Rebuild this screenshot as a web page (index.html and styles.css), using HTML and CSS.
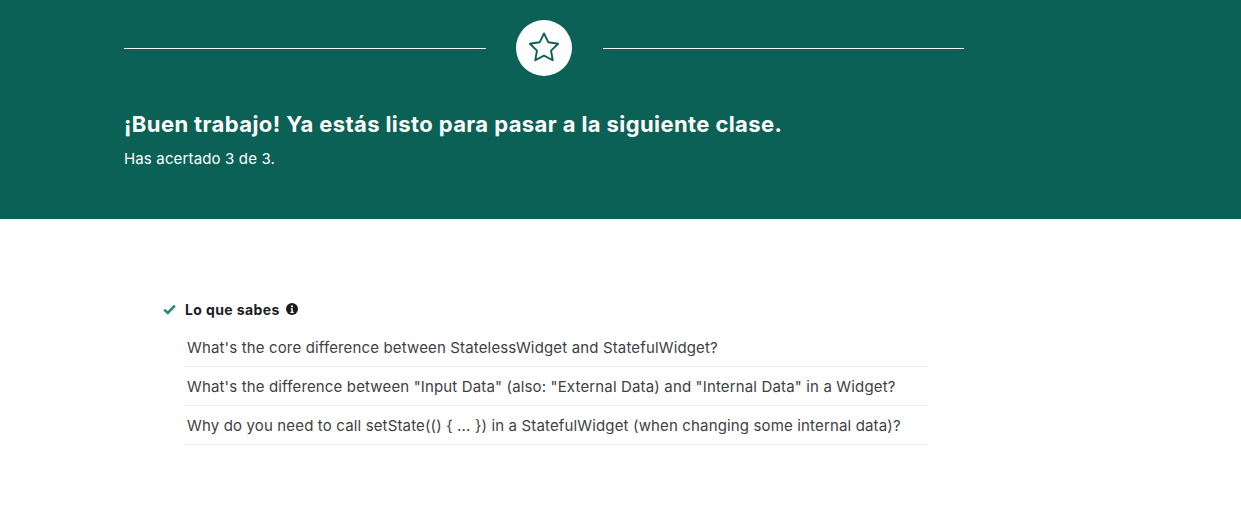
FILE: index.html
```html
<!DOCTYPE html>
<html lang="es">
<head>
<meta charset="utf-8">
<link rel="stylesheet" href="styles.css">
</head>
<body>
<header class="hero">
  <div class="hero-inner">
    <div class="divider">
      <span class="line"></span>
      <span class="badge">
        <svg width="38" height="38" viewBox="0 0 24 24" fill="none" stroke="#0b6156" stroke-width="1.2" stroke-linejoin="round"><path d="M12 2.8l2.75 5.6 6.15.9-4.45 4.33 1.05 6.12L12 16.86l-5.5 2.89 1.05-6.12L3.1 9.3l6.15-.9z"/></svg>
      </span>
      <span class="line"></span>
    </div>
    <h1 class="title">¡Buen trabajo! Ya estás listo para pasar a la siguiente clase.</h1>
    <p class="subtitle">Has acertado 3 de 3.</p>
  </div>
</header>
<main class="results">
  <div class="section-head">
    <svg class="check" width="13" height="11" viewBox="0 0 13 11"><path d="M1.2 5.6l3.6 3.4 7-7.4" fill="none" stroke="#1c8c7c" stroke-width="2.6"/></svg>
    <span class="section-title">Lo que sabes</span>
    <svg class="info" width="12" height="12" viewBox="0 0 12 12"><circle cx="6" cy="6" r="6" fill="#1c1d1f"/><circle cx="6" cy="3.3" r="1.1" fill="#fff"/><path d="M4.6 5.2h2.2v3.6h0.9v1.1H4.4V8.8h0.9V6.3h-0.7z" fill="#fff"/></svg>
  </div>
  <ul class="questions">
    <li class="question">What's the core difference between StatelessWidget and StatefulWidget?</li>
    <li class="question">What's the difference between "Input Data" (also: "External Data) and "Internal Data" in a Widget?</li>
    <li class="question">Why do you need to call setState(() { ... }) in a StatefulWidget (when changing some internal data)?</li>
  </ul>
</main>
</body>
</html>
```
FILE: styles.css
```css
* { box-sizing: border-box; }
html, body { margin: 0; padding: 0; background: #fff; }
body { font-family: "Inter", "Roboto", "Liberation Sans", sans-serif; color: #1c1d1f; }

.hero { background: #0b6156; height: 219px; color: #fff; }
.hero-inner { width: 840px; margin-left: 124px; padding-top: 20px; }

.divider { display: flex; align-items: center; height: 56px; }
.line { flex: 1; height: 1px; background: #fff; }
.badge { width: 56px; height: 56px; border-radius: 50%; background: #fff; margin: 0 31px 0 30px; display: flex; align-items: center; justify-content: center; }

.title { margin: 0; padding-top: 34px; font-size: 22px; font-weight: 700; line-height: 28px; letter-spacing: 0.4px; }
.subtitle { margin: 0; padding-top: 11px; font-size: 15px; line-height: 20px; letter-spacing: 0.15px; }

.results { margin-left: 163px; padding-top: 79px; width: 765px; }
.section-head { display: flex; align-items: center; height: 22px; }
.check { margin-right: 9px; }
.section-title { font-size: 14px; font-weight: 700; margin-right: 6px; letter-spacing: 0.4px; }
.info { display: block; }

.questions { list-style: none; margin: 8px 0 0 21px; padding: 0; }
.question { height: 39px; line-height: 37px; padding: 1px 0 0 3px; font-size: 15px; color: #3e4143; border-bottom: 1px solid #ececec; letter-spacing: 0.15px; }
```
